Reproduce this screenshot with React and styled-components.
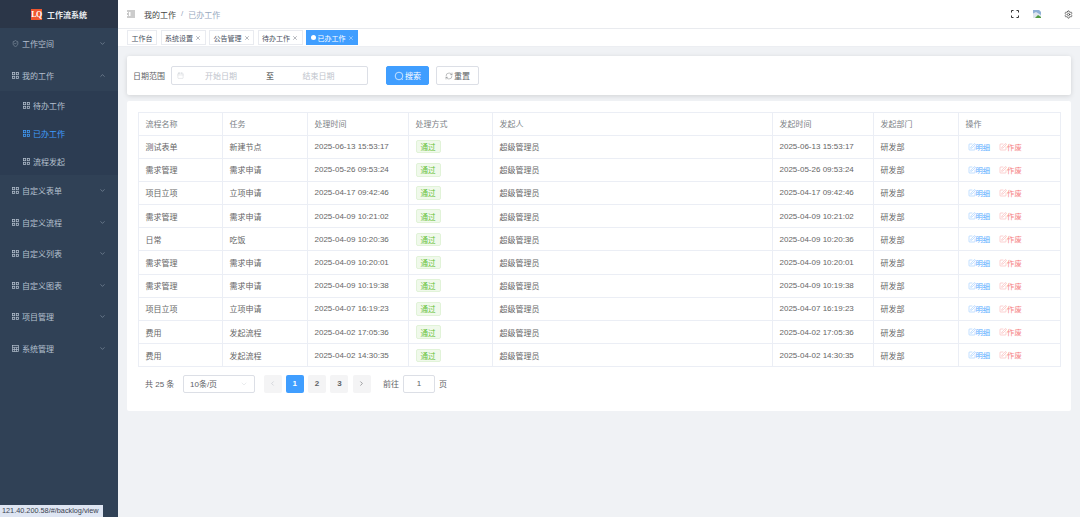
import React from 'react';
import styled, { createGlobalStyle } from 'styled-components';
import { ChevronDown, ChevronUp, ChevronLeft, ChevronRight, ShieldCheck, Calendar, RefreshCw, Settings, SquarePen, X } from 'lucide-react';

const Global = createGlobalStyle`
  html, body { margin: 0; padding: 0; height: 100%; }
  body { font-family: "Liberation Sans", "Noto Sans CJK SC", sans-serif; font-size: 8px; color: #606266; overflow: hidden; }
  #root { height: 517px; }
  * { box-sizing: border-box; }
`;

const Shell = styled.div`display: flex; width: 1080px; height: 517px; position: relative; background: #f0f2f5;`;
const Sidebar = styled.aside`width: 118px; flex: none; background: #304156; display: flex; flex-direction: column;`;
const Brand = styled.div`height: 28px; background: #2b3648; display: flex; align-items: center; padding-left: 31px; gap: 5px; color: #e8ebef; font-weight: 700; font-size: 8px;`;
const Logo = styled.span`width: 11px; height: 11px; background: #f0562f; color: #fff; font: 700 8px "Liberation Serif", serif; display: flex; align-items: center; justify-content: center; letter-spacing: -.5px;`;
const MenuRow = styled.div`height: ${p => p.$sub ? 28 : 31.5}px; display: flex; align-items: center; gap: 3px; padding-left: ${p => p.$sub ? 23 : 12}px; padding-right: 12px; color: ${p => p.$active ? '#409eff' : '#b4c0ce'}; background: ${p => p.$sub ? '#2c3c52' : 'transparent'}; font-size: 8px;`;
const MenuLabel = styled.span`flex: 1;`;
const Main = styled.main`flex: 1; min-width: 0; display: flex; flex-direction: column;`;
const Header = styled.header`height: 29px; background: #fff; border-bottom: 1px solid #e9ebef; display: flex; align-items: center; padding: 0 7px 0 9px; gap: 9px;`;
const Crumbs = styled.div`display: flex; gap: 5px; flex: 1; color: #97a8be;`;
const CrumbStrong = styled.span`color: #444;`;
const HeaderIcons = styled.div`display: flex; align-items: center; gap: 13px;`;
const GearSlot = styled.span`display: flex; margin-left: 9px;`;
const TagsBar = styled.div`height: 18px; background: #fff; border-bottom: 1px solid #eceef2; display: flex; align-items: center; gap: 3.5px; padding-left: 9px;`;
const TagItem = styled.div`height: 15px; display: flex; align-items: center; justify-content: center; gap: 2px; padding: 0 3.5px; border: 1px solid ${p => p.$active ? '#409eff' : '#e9ebf0'}; background: ${p => p.$active ? '#409eff' : '#fff'}; color: ${p => p.$active ? '#fff' : '#495060'}; font-size: 7px; white-space: nowrap;`;
const Dot = styled.span`width: 5px; height: 5px; border-radius: 50%; background: #fff;`;
const Content = styled.div`padding: 9px 9px 0; display: flex; flex-direction: column; gap: 6px;`;
const SearchCard = styled.section`height: 39px; background: #fff; border-radius: 2px; box-shadow: 0 1px 5px rgba(0,0,0,.13); display: flex; align-items: center; padding-left: 6px;`;
const FieldLabel = styled.span`width: 38px; color: #606266;`;
const RangeInput = styled.div`width: 197px; height: 19px; border: 1px solid #dcdfe6; border-radius: 2px; display: flex; align-items: center; padding-left: 5px; color: #c0c4cc;`;
const RangeText = styled.span`width: ${p => p.$w}px; text-align: center; color: ${p => p.$dark ? '#303133' : '#c0c4cc'};`;
const Btn = styled.button`width: 43px; height: 19px; margin-left: ${p => p.$ml}px; border-radius: 2px; border: 1px solid ${p => p.$primary ? '#409eff' : '#dcdfe6'}; background: ${p => p.$primary ? '#409eff' : '#fff'}; color: ${p => p.$primary ? '#fff' : '#606266'}; font: inherit; font-size: 8px; display: flex; align-items: center; justify-content: center; gap: 1px; padding: 0;`;
const TableCard = styled.section`height: 310px; background: #fff; border-radius: 2px; padding: 11px;`;
const Grid = styled.table`width: 921.5px; table-layout: fixed; border-collapse: collapse; border: 1px solid #ebeef5;`;
const Th = styled.th`height: 22.5px; padding: 0 0 1px 6.5px; border: 1px solid #ebeef5; text-align: left; font-weight: 400; color: #7b7f86; font-size: 8px; white-space: nowrap;`;
const Td = styled.td`height: 23.2px; padding: 0 0 0 6.5px; border: 1px solid #ebeef5; color: #666; font-size: 8px; white-space: nowrap;`;
const Status = styled.span`display: inline-flex; width: 25px; height: 13.5px; align-items: center; justify-content: center; background: #f0f9eb; border: 1px solid #e1f3d8; border-radius: 2px; color: #67c23a; font-size: 7.5px; vertical-align: middle;`;
const Ops = styled.div`display: flex; gap: 9px; padding-left: 2px;`;
const OpLink = styled.span`display: inline-flex; align-items: center; gap: 0; font-size: 7.3px; color: ${p => p.$danger ? '#f56c6c' : '#409eff'}; opacity: .85;`;
const Pager = styled.div`display: flex; align-items: center; height: 17px; margin-top: 8px; padding-left: 7px; color: #606266;`;
const Total = styled.span`width: 38px;`;
const SizeSelect = styled.div`width: 71.5px; height: 18px; border: 1px solid #dcdfe6; border-radius: 2px; display: flex; align-items: center; justify-content: space-between; padding: 0 6px 0 6px; margin-right: 9px; color: #606266;`;
const PageBtn = styled.div`width: 18px; height: 18px; margin-right: 4.3px; border-radius: 2px; display: flex; align-items: center; justify-content: center; background: ${p => p.$active ? '#409eff' : '#f4f4f5'}; color: ${p => p.$active ? '#fff' : p.$off ? '#c0c4cc' : '#606266'}; font-weight: 700;`;
const GoLabel = styled.span`margin: 0 ${p => p.$end ? 0 : 4}px 0 ${p => p.$end ? 4 : 8}px;`;
const GoInput = styled.div`width: 32px; height: 18px; border: 1px solid #dcdfe6; border-radius: 2px; display: flex; align-items: center; justify-content: center;`;
const StatusTip = styled.div`position: absolute; left: 0; bottom: 0; width: 103px; height: 12px; background: #dee5f2; color: #3c4350; font-size: 7.3px; line-height: 12px; padding-left: 2px; white-space: nowrap; overflow: hidden;`;

const GridIcon = () => (
  <svg width="7" height="7" viewBox="0 0 7 7" fill="none" stroke="currentColor" strokeWidth=".75">
    <rect x=".4" y=".4" width="2.3" height="2.3" /><rect x="4.3" y=".4" width="2.3" height="2.3" />
    <rect x=".4" y="4.3" width="2.3" height="2.3" /><rect x="4.3" y="4.3" width="2.3" height="2.3" />
  </svg>
);
const TableIcon = () => (
  <svg width="7" height="7" viewBox="0 0 7 7" fill="none" stroke="currentColor" strokeWidth=".7">
    <rect x=".4" y=".4" width="6.2" height="6.2" /><path d="M.4 2.4h6.2M.4 4.5h6.2M2.4 2.4v4.2M4.5 2.4v4.2" />
  </svg>
);
const RoundSearch = () => (
  <svg width="10" height="10" viewBox="0 0 10 10" fill="none" stroke="currentColor" strokeWidth=".7">
    <circle cx="5" cy="5" r="3.8" /><path d="M7.7 7.7l1.1 1.1" />
  </svg>
);

const menuAfter = ['自定义表单', '自定义流程', '自定义列表', '自定义图表', '项目管理'];
const widths = [84, 85, 101, 84, 280, 101, 85, 102];
const heads = ['流程名称', '任务', '处理时间', '处理方式', '发起人', '发起时间', '发起部门', '操作'];
const rows = [
  ['测试表单', '新建节点', '2025-06-13 15:53:17'],
  ['需求管理', '需求申请', '2025-05-26 09:53:24'],
  ['项目立项', '立项申请', '2025-04-17 09:42:46'],
  ['需求管理', '需求申请', '2025-04-09 10:21:02'],
  ['日常', '吃饭', '2025-04-09 10:20:36'],
  ['需求管理', '需求申请', '2025-04-09 10:20:01'],
  ['需求管理', '需求申请', '2025-04-09 10:19:38'],
  ['项目立项', '立项申请', '2025-04-07 16:19:23'],
  ['费用', '发起流程', '2025-04-02 17:05:36'],
  ['费用', '发起流程', '2025-04-02 14:30:35'],
];
const tags = [['工作台'], ['系统设置', 1], ['公告管理', 1], ['待办工作', 1], ['已办工作', 1, 1]];

export default function App() {
  return (
    <Shell>
      <Global />
      <Sidebar>
        <Brand><Logo>LQ</Logo>工作流系统</Brand>
        <MenuRow><ShieldCheck size={7} strokeWidth={1.4} /><MenuLabel>工作空间</MenuLabel><ChevronDown size={7} strokeWidth={1.4} /></MenuRow>
        <MenuRow><GridIcon /><MenuLabel>我的工作</MenuLabel><ChevronUp size={7} strokeWidth={1.4} /></MenuRow>
        <MenuRow $sub><GridIcon /><MenuLabel>待办工作</MenuLabel></MenuRow>
        <MenuRow $sub $active><GridIcon /><MenuLabel>已办工作</MenuLabel></MenuRow>
        <MenuRow $sub><GridIcon /><MenuLabel>流程发起</MenuLabel></MenuRow>
        {menuAfter.map(t => (
          <MenuRow key={t}><GridIcon /><MenuLabel>{t}</MenuLabel><ChevronDown size={7} strokeWidth={1.4} /></MenuRow>
        ))}
        <MenuRow><TableIcon /><MenuLabel>系统管理</MenuLabel><ChevronDown size={7} strokeWidth={1.4} /></MenuRow>
      </Sidebar>
      <Main>
        <Header>
          <svg width="8" height="8" viewBox="0 0 8 8" fill="none" stroke="#555" strokeWidth=".6">
            <path d="M0 1h8M3.5 3h4.5M3.5 5h4.5M0 7h8M2 2.6L.4 4 2 5.4" />
          </svg>
          <Crumbs><CrumbStrong>我的工作</CrumbStrong><span>/</span><span>已办工作</span></Crumbs>
          <HeaderIcons>
            <svg width="8" height="8" viewBox="0 0 8 8" fill="none" stroke="#333" strokeWidth="1">
              <path d="M0.5 2.5v-2h2M5.5 .5h2v2M7.5 5.5v2h-2M2.5 7.5h-2v-2" />
            </svg>
            <svg width="10" height="10" viewBox="0 0 10 10">
              <path d="M1 1h6l2 2v6H1z" fill="#dfe6ee" />
              <path d="M1 4.5l3-1.5 5 3v-3l-2-2H1z" fill="#8fb0d6" />
              <path d="M3 9l3-3 3 2v1z" fill="#4f9a3f" />
            </svg>
            <GearSlot><Settings size={9} strokeWidth={1.6} color="#222" /></GearSlot>
          </HeaderIcons>
        </Header>
        <TagsBar>
          {tags.map(([t, close, active]) => (
            <TagItem key={t} $active={active}>
              {active && <Dot />}{t}{close && <X size={6} strokeWidth={1.6} />}
            </TagItem>
          ))}
        </TagsBar>
        <Content>
          <SearchCard>
            <FieldLabel>日期范围</FieldLabel>
            <RangeInput>
              <Calendar size={7} strokeWidth={1.2} />
              <RangeText $w={74}>开始日期</RangeText>
              <RangeText $w={24} $dark>至</RangeText>
              <RangeText $w={73}>结束日期</RangeText>
            </RangeInput>
            <Btn $primary $ml={18}><RoundSearch />搜索</Btn>
            <Btn $ml={7}><RefreshCw size={8} strokeWidth={1.2} />重置</Btn>
          </SearchCard>
          <TableCard>
            <Grid>
              <colgroup>{widths.map((w, i) => <col key={i} style={{ width: w }} />)}</colgroup>
              <thead><tr>{heads.map(h => <Th key={h}>{h}</Th>)}</tr></thead>
              <tbody>
                {rows.map((r, i) => (
                  <tr key={i}>
                    <Td>{r[0]}</Td><Td>{r[1]}</Td><Td>{r[2]}</Td>
                    <Td><Status>通过</Status></Td>
                    <Td>超级管理员</Td><Td>{r[2]}</Td><Td>研发部</Td>
                    <Td>
                      <Ops>
                        <OpLink><SquarePen size={8} strokeWidth={1.1} />明细</OpLink>
                        <OpLink $danger><SquarePen size={8} strokeWidth={1.1} />作废</OpLink>
                      </Ops>
                    </Td>
                  </tr>
                ))}
              </tbody>
            </Grid>
            <Pager>
              <Total>共 25 条</Total>
              <SizeSelect>10条/页<ChevronDown size={8} strokeWidth={1} color="#c0c4cc" /></SizeSelect>
              <PageBtn $off><ChevronLeft size={7} /></PageBtn>
              <PageBtn $active>1</PageBtn>
              <PageBtn>2</PageBtn>
              <PageBtn>3</PageBtn>
              <PageBtn><ChevronRight size={7} /></PageBtn>
              <GoLabel>前往</GoLabel>
              <GoInput>1</GoInput>
              <GoLabel $end>页</GoLabel>
            </Pager>
          </TableCard>
        </Content>
      </Main>
      <StatusTip>121.40.200.58/#/backlog/view</StatusTip>
    </Shell>
  );
}
